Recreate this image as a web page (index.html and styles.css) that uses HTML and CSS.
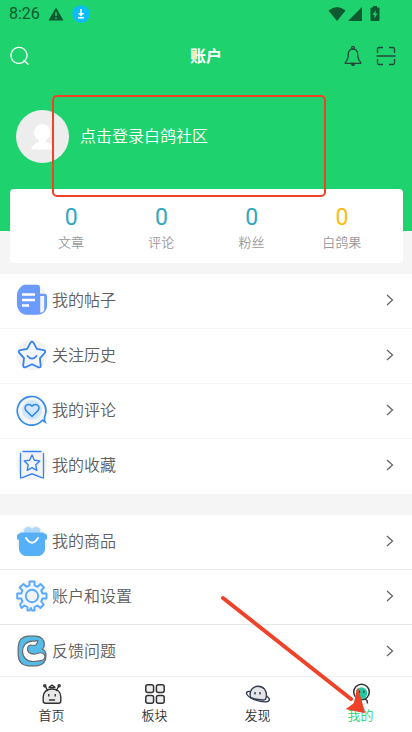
FILE: index.html
```html
<!DOCTYPE html>
<html lang="zh-CN">
<head>
<meta charset="utf-8">
<meta name="viewport" content="width=device-width, initial-scale=1">
<title>账户</title>
<link rel="stylesheet" href="styles.css">
</head>
<body>
<div class="app">
  <main class="content">
    <header class="hero">
      <div class="status">
        <span class="time">8:26</span>
        <svg class="warn" width="16" height="14" viewBox="0 0 16 14"><path d="M8 0.500 15.500 13.500H.5z" fill="#0d5a30"/><path d="M8 5v4M8 10.500v1.500" stroke="#1ed26d" stroke-width="1.400"/></svg>
        <svg class="download" width="18" height="18" viewBox="0 0 18 18"><circle cx="9" cy="9" r="8.700" fill="#0bbcfb"/><path d="M9 4v6M6 12.800h6" stroke="#fff" stroke-width="1.600"/><path d="M5.800 8h6.400L9 11.500z" fill="#fff"/></svg>
        <span class="signals">
          <svg width="18" height="16" viewBox="0 0 18 16"><path d="M.5 4.500Q9-2.500 17.500 4.500L9 15z" fill="#0d5a30"/></svg>
          <svg width="14" height="16" viewBox="0 0 14 16"><path d="M14 1v14H0z" fill="#0d5a30"/></svg>
          <svg class="battery" width="10" height="16" viewBox="0 0 10 16"><path d="M3 0h4v1.500h1.500q1 0 1 1V14q0 1-1 1h-7q-1 0-1-1V2.500q0-1 1-1H3z" fill="#0d5a30"/><path d="M5.700 4 2.500 9h2v3.500l3-5h-2z" fill="#1ed26d"/></svg>
        </span>
      </div>
      <div class="bar">
        <div class="side">
          <button type="button" aria-label="搜索"><svg width="20" height="20" viewBox="0 0 20 20" fill="none" stroke="#fff" stroke-width="1.300"><path d="M14.200 15.500A8 8 0 1 1 16.500 12.200M13.500 14.200 18.600 18.600"/><path d="M16.500 12.200A8 8 0 0 1 14 15"/></svg></button>
        </div>
        <h1>账户</h1>
        <div class="side side-end">
          <button type="button" aria-label="通知"><svg width="20" height="22" viewBox="0 0 20 22" fill="none" stroke="#27453a" stroke-width="1.300" stroke-linejoin="round"><circle cx="10" cy="2.800" r="1.400"/><path d="M10 4.200c-3 0-4.700 2-4.700 5 0 4-.8 6-3 8.200v1h15.400v-1c-2.200-2.200-3-4.200-3-8.200 0-3-1.700-5-4.700-5z"/><path d="M8 18.500q2 4 4 0z" fill="#27453a"/></svg></button>
          <button type="button" aria-label="扫一扫"><svg width="20" height="20" viewBox="0 0 20 20" fill="none" stroke="#27453a" stroke-width="1.300"><path d="M1.500 7V3q0-1.500 1.500-1.500h4M13 1.500h4q1.500 0 1.500 1.500v4M1.500 13v4q0 1.500 1.500 1.500h4M13 18.500h4q1.500 0 1.500-1.500v-4M.5 10h19"/></svg></button>
        </div>
      </div>
      <a class="profile" href="#login">
        <svg width="53" height="53" viewBox="0 0 53 53"><circle cx="26.500" cy="26.500" r="26.500" fill="#ededed"/><ellipse cx="26.300" cy="22.500" rx="8.300" ry="8.600" fill="#fff"/><path d="M23 29h7v3c4 1 7 3.500 7.600 7.500H15.200C16 35.500 19 33 23 32z" fill="#fff"/></svg>
        <span>点击登录白鸽社区</span>
      </a>
    </header>

    <section class="stats">
      <a href="#posts"><strong>0</strong><span>文章</span></a>
      <a href="#comments"><strong>0</strong><span>评论</span></a>
      <a href="#fans"><strong>0</strong><span>粉丝</span></a>
      <a href="#points"><strong class="gold">0</strong><span>白鸽果</span></a>
    </section>

    <nav class="list">
      <a class="row" href="#my-posts">
        <svg class="icon" viewBox="0 0 32 32"><circle cx="16" cy="16" r="15.500" fill="#f3f3f3"/><path d="M8 .8h13q3 0 3 3v6h4.500q2.500 0 2.500 2.500v9c0 6-4 9.500-9.500 9.500H11C4.500 30.800 1 25 1 20v-9C1 7 4 2.500 8 .8z" fill="#6c9bff"/><path d="M24.200 12h4v14.500l-2 2h-2z" fill="#f5f5f5"/><path d="M6 10.500h13M6 16h13M6 21.500h7" stroke="#fff" stroke-width="2.400"/></svg>
        <span>我的帖子</span><svg class="chevron" viewBox="0 0 8 12"><path d="m1 1 5.500 5L1 11"/></svg>
      </a>
      <a class="row" href="#history">
        <svg class="icon" viewBox="0 0 32 32"><circle cx="16" cy="16" r="15.500" fill="#f3f3f3"/><path d="M14.500 3.700q1.500-2 3 0l3.300 6.200 7 1.300q2.300.8.800 2.800l-4.700 5.300.8 7.500q-.2 2.200-2.400 1.400L16 25.200l-6.500 3q-2.200.6-2.300-1.500L8 19.200l-4.700-5.300q-1.400-2 .9-2.700l7-1.300z" fill="#f3f6fb" stroke="#3681f4" stroke-width="1.800" stroke-linejoin="round"/><path d="M11.500 17q4.500 5.400 9 0" fill="none" stroke="#3681f4" stroke-width="1.800" stroke-linecap="round"/></svg>
        <span>关注历史</span><svg class="chevron" viewBox="0 0 8 12"><path d="m1 1 5.500 5L1 11"/></svg>
      </a>
      <a class="row" href="#my-comments">
        <svg class="icon" viewBox="0 0 32 32"><circle cx="16" cy="16" r="15.500" fill="#f5f5f5"/><circle cx="16" cy="16" r="10" fill="#d2e7fd"/><path d="M26.300 26.300A14.300 14.300 0 1 1 29.400 20.500M26 26l3 1.800q-1.300-3 .4-7.300" fill="none" stroke="#348ceb" stroke-width="1.700"/><path d="m16 22.300-5.500-5.200c-4.500-4.500 2-9.200 5.500-4.900 3.500-4.300 10 .4 5.500 4.900z" fill="none" stroke="#348ceb" stroke-width="1.600" stroke-linejoin="round"/></svg>
        <span>我的评论</span><svg class="chevron" viewBox="0 0 8 12"><path d="m1 1 5.500 5L1 11"/></svg>
      </a>
      <a class="row" href="#favorites">
        <svg class="icon" viewBox="0 0 32 32"><circle cx="16" cy="16" r="15.500" fill="#f3f3f3"/><path d="M4.500 4.500V29M27.500 4.500V29M7 2.500h18M5.500 28.800l10.500-4 10.500 4" fill="none" stroke="#3681f4" stroke-width="1.300" stroke-linecap="round"/><path d="m16 6 2.400 5.200 5.400.7-4 3.900 1 5.500-4.800-2.700-4.800 2.700 1-5.500-4-3.900 5.400-.7z" fill="#f3f6fb" stroke="#3681f4" stroke-width="1.400" stroke-linejoin="round"/></svg>
        <span>我的收藏</span><svg class="chevron" viewBox="0 0 8 12"><path d="m1 1 5.500 5L1 11"/></svg>
      </a>
    </nav>

    <nav class="list list-strong">
      <a class="row" href="#goods">
        <svg class="icon" viewBox="0 0 32 32"><circle cx="16" cy="16" r="15.500" fill="#f3f3f3"/><path d="M8 8V5q1-3.500 4.500-3 2 0 3.500 1.700 2-1.900 4-1.700 4 0 4.200 3.500V8z" fill="#add8fa"/><path d="M5 7.500h22l4 2.500v4l-2 1v10q-1.500 5-6 6H9q-4.500-1-6-6V15l-2-1v-4z" fill="#55b0f8"/><path d="M10 13q6 9.400 12 0" fill="none" stroke="#fff" stroke-width="1.900" stroke-linecap="round"/></svg>
        <span>我的商品</span><svg class="chevron" viewBox="0 0 8 12"><path d="m1 1 5.500 5L1 11"/></svg>
      </a>
      <a class="row" href="#settings">
        <svg class="icon" viewBox="0 0 32 32"><circle cx="16" cy="16" r="15.500" fill="#f3f3f3"/><path d="M13.500 1.500h5v4l3 1.300 3-2.800 3.500 3.500-2.800 3 1.300 3h4v5h-4l-1.300 3 2.500 3-3.200 3.500-3-2.500-3 1.500v3.500h-2.500l-1-2.500-1.500 2.500h-2V27l-3-1.500-3 2.500L4 24.500l2.500-3-1.300-3h-4v-5h4l1.300-3-2.800-3L7.500 4l3 2.800 3-1.300z" fill="#f3f6fb" stroke="#59aafb" stroke-width="1.900" stroke-linejoin="round"/><circle cx="16" cy="16" r="6.200" fill="#f3f3f3" stroke="#59aafb" stroke-width="1.900"/></svg>
        <span>账户和设置</span><svg class="chevron" viewBox="0 0 8 12"><path d="m1 1 5.500 5L1 11"/></svg>
      </a>
      <a class="row" href="#feedback">
        <svg class="icon" viewBox="0 0 32 32"><circle cx="16" cy="16" r="15.500" fill="#f3f3f3"/><path d="M12 1.200h8c5 .3 8 3.500 8.300 8 .3 3-2 5-2 5 2.700 1 3.700 3.500 3.700 6.300 0 6-3.500 9.800-9 10.300h-9C6 30.500 2.500 27 2.200 20v-8C2.500 6 6 1.700 12 1.200z" fill="#54bce9" stroke="#65686b" stroke-width="1.200"/><path d="M21.800 5.500c-2 .8-3.500.4-5.800.6C10 6.500 6.500 11 6.500 16.500c0 6 4.500 10 10.500 10 6 0 12-.6 12-4.800 0-3.400-3.500-4.700-7-3.500-3.500 1.300-6.500 1.300-9-.7-2.500-2.200-1.800-7 1.500-7.500l4 .5c1.800-.5 3-2.500 3.300-5z" fill="#fff" stroke="#65686b" stroke-width="1.200" stroke-linejoin="round"/></svg>
        <span>反馈问题</span><svg class="chevron" viewBox="0 0 8 12"><path d="m1 1 5.500 5L1 11"/></svg>
      </a>
    </nav>
  </main>

  <nav class="tabs">
    <a href="#home">
      <svg width="20" height="22" viewBox="0 0 20 22" fill="none" stroke="#303234" stroke-width="1.400"><path d="M3.500 20.300h13q2.300 0 2.300-2.300v-4c0-5-3.500-8-8.800-8s-8.800 3-8.800 8v4q0 2.300 2.300 2.300z" fill="#e9e9e9"/><path d="M5.500 7.500 3.300 3M14.500 7.500 16.700 3M7 4.200l3-2.200 3 2.200M8 4.500h4M7.500 17h5" stroke-linecap="round"/><path d="M6.800 11v2.500M13.200 11v2.500"/><circle cx="2.800" cy="2.800" r="1"/><circle cx="17.200" cy="2.800" r="1"/></svg>
      <span>首页</span>
    </a>
    <a href="#boards">
      <svg width="22" height="22" viewBox="0 0 22 22" fill="#eee" stroke="#303234" stroke-width="1.500"><rect x="1.800" y="1.800" width="7.800" height="7.800" rx="2"/><rect x="12.400" y="1.800" width="7.800" height="7.800" rx="2"/><rect x="1.800" y="12.400" width="7.800" height="7.800" rx="2"/><rect x="12.400" y="12.400" width="7.800" height="7.800" rx="2"/></svg>
      <span>板块</span>
    </a>
    <a href="#discover">
      <svg width="26" height="22" viewBox="0 0 26 22" fill="none" stroke="#343b50" stroke-width="1.400"><path d="M5.500 14.500C4 8 7.500 3.300 13 3.300s9 4.200 8.300 10.200c-.3 3-1.500 3.800-3.500 3.500-5-.2-9-1-12.300-2.500z" fill="#e4e5e6"/><path d="M5 8.500C2 8 .8 9.500 2 11.500c2.500 4.200 13 7.700 19 7.300 4-.2 4.500-2.800 1-5.600" stroke-linecap="round"/><path d="M10 9v2.500M15 9v2.500"/></svg>
      <span>发现</span>
    </a>
    <a class="active" href="#me" aria-current="page">
      <svg width="20" height="22" viewBox="0 0 20 22" fill="none"><circle cx="10.500" cy="9" r="7.800" fill="#fff" stroke="#303234" stroke-width="1.500"/><path d="M4.800 10a5.700 5.700 0 0 1 11.400 0c0 3-2 6.300-5.700 6.300S4.800 13 4.800 10z" fill="#20cca6"/><path d="M8.500 7.500V10M12.800 7.500V10" stroke="#303234" stroke-width="1.300"/><path d="M5 16.500 3.800 20M14 16l2 1.500.5 3" stroke="#303234" stroke-width="1.400"/></svg>
      <span>我的</span>
    </a>
  </nav>

  <div class="highlight"></div>
  <svg class="arrow" width="150" height="124" viewBox="0 0 150 124"><path d="M6 6 134 107" stroke="#ee4328" stroke-width="4" stroke-linecap="round"/><path d="m148 121-19-4 8-4 4-18z" fill="#ee4328"/><path d="m148 121-19-4 8-6 3-15z" fill="#ee4328"/></svg>
</div>
</body>
</html>
```
FILE: styles.css
```css
* {
  box-sizing: border-box;
}

body {
  margin: 0;
  background: #f5f5f5;
  color: #606060;
  font-family: "Noto Sans CJK SC", sans-serif;
  font-size: 16px;
  font-weight: 350;
}

a {
  color: inherit;
  text-decoration: none;
}

svg {
  display: block;
  flex: none;
}

button {
  padding: 0;
  border: 0;
  background: none;
}

.app {
  position: relative;
  display: flex;
  flex-direction: column;
  height: 100vh;
  overflow: hidden;
}

.content {
  flex: 1;
  min-height: 0;
  overflow-y: auto;
  scrollbar-width: none;
}

.hero {
  padding-bottom: 68px;
  background: #1ed26d;
  color: #fff;
}

.status {
  display: flex;
  align-items: center;
  gap: 8px;
  height: 28px;
  padding: 0 32px 0 9px;
}

.time {
  color: #0d5a30;
  font: 16px/28px Roboto, sans-serif;
}

.signals {
  display: flex;
  gap: 2px;
  margin-left: auto;
}

.battery {
  margin-left: 6px;
}

.bar {
  display: flex;
  align-items: center;
  height: 56px;
  padding: 0 16px 0 10px;
}

.side {
  display: flex;
  flex: 1;
}

.side-end {
  justify-content: flex-end;
  align-items: center;
  gap: 13px;
}

h1 {
  margin: 0;
  padding: 0 0 2px 6px;
  font-size: 16px;
  line-height: 24px;
}

.profile {
  display: flex;
  align-items: center;
  gap: 11px;
  margin-top: 26px;
  padding: 0 16px;
}

.profile span {
  padding-bottom: 4px;
}

.stats {
  position: relative;
  display: grid;
  grid-template-columns: repeat(4, 1fr);
  height: 74px;
  margin: -42px 9px 11px 10px;
  padding: 17px 16px;
  border-radius: 4px;
  background: #fff;
}

.stats a {
  display: flex;
  flex-direction: column;
  align-items: center;
  color: #999;
  font-size: 13px;
  line-height: 24px;
}

.stats strong {
  color: #30a8c0;
  font-family: Roboto, sans-serif;
  font-size: 23px;
  font-weight: 400;
}

.stats .gold {
  color: #fbbd12;
}

.list {
  margin-bottom: 21px;
  background: #fff;
}

.row {
  display: flex;
  align-items: center;
  gap: 4px;
  height: 55px;
  padding: 0 18px 2px 16px;
  border-bottom: 1px solid #f5f5f5;
}

.row span {
  padding-bottom: 2px;
}

.list-strong .row {
  border-color: #e6e6e6;
}

.list .row:last-child {
  border-color: transparent;
}

.icon {
  width: 32px;
  height: 32px;
}

.chevron {
  width: 8px;
  height: 14px;
  margin-left: auto;
  fill: none;
  stroke: #666;
  stroke-width: 1.3;
}

.tabs {
  display: grid;
  grid-template-columns: repeat(4, 1fr);
  height: 56px;
  padding-top: 6px;
  border-top: 1px solid #f0f0f0;
  background: #fff;
}

.tabs a {
  display: flex;
  flex-direction: column;
  align-items: center;
  color: #303234;
  font-size: 13px;
  line-height: 20px;
}

.tabs .active {
  color: #1ed26d;
}

.highlight {
  position: absolute;
  top: 95px;
  left: 52px;
  width: 274px;
  height: 102px;
  border: 2px solid #ee4328;
  border-radius: 5px;
  pointer-events: none;
}

.arrow {
  position: absolute;
  top: 592px;
  left: 217px;
  pointer-events: none;
}
```
